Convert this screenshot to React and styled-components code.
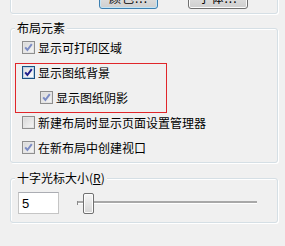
import styled, { createGlobalStyle, css } from "styled-components"

const GlobalStyle = createGlobalStyle`
    body {
        margin: 0;
        background: #f0f0f0;
    }
`

const Page = styled.div`
    width: 285px;
    height: 246px;
    overflow: hidden;
    box-sizing: border-box;
    padding-left: 10px;
    background: #f0f0f0;
    font-family: "Noto Sans CJK SC", "Noto Sans", sans-serif;
    font-size: 12px;
    color: #000;
`

const groupBorder = css`
    box-sizing: border-box;
    width: 268px;
    border: 1px solid #d5dfe5;
    border-radius: 3px;
    box-shadow: inset 1px 1px 0 #fff, 1px 1px 0 #fff;
`

const TopGroup = styled.div`
    ${groupBorder}
    height: 44px;
    margin-top: -30px;
    display: flex;
    align-items: flex-end;
    gap: 30px;
    padding: 0 0 4px 88px;
`

const Button = styled.div`
    box-sizing: border-box;
    width: ${(p) => p.$width}px;
    height: 23px;
    display: flex;
    align-items: center;
    justify-content: center;
    border: 1px solid ${(p) => (p.$focused ? "#3c7fb1" : "#707070")};
    border-radius: 3px;
    background: linear-gradient(#f2f2f2 0%, #ebebeb 50%, #dddddd 51%, #cfcfcf 100%);
    box-shadow: inset 0 0 0 1px ${(p) => (p.$focused ? "#c4e5f6" : "#fbfbfb")};
    letter-spacing: 1px;
`

const Group = styled.fieldset`
    ${groupBorder}
    margin: ${(p) => p.$top}px 0 0 0;
    padding: 0 0 ${(p) => p.$bottom}px 4px;
    min-inline-size: 0;
`

const Legend = styled.legend`
    padding: 0 2px;
    line-height: 14px;
    background: #f0f0f0;
`

const Rows = styled.div`
    display: flex;
    flex-direction: column;
`

const Marked = styled.div`
    position: relative;
    display: flex;
    flex-direction: column;

    &::after {
        content: "";
        position: absolute;
        left: 0;
        top: 3px;
        width: 152px;
        height: 50px;
        box-sizing: border-box;
        border: 1px solid #e0262a;
        pointer-events: none;
    }
`

const Row = styled.div`
    height: 25px;
    display: flex;
    align-items: center;
    gap: 3px;
    padding-left: ${(p) => p.$indent}px;
    white-space: nowrap;
`

const Box = styled.span`
    box-sizing: border-box;
    width: 13px;
    height: 13px;
    flex: none;
    display: flex;
    align-items: center;
    justify-content: center;
    border: 1px solid ${(p) => (p.$active ? "#1c5180" : "#8f8f8f")};
    background: ${(p) =>
        p.$active
            ? "linear-gradient(135deg, #dcdcdc, #ffffff)"
            : "linear-gradient(135deg, #d6d6d6, #f7f7f7)"};
    box-shadow: inset 0 0 0 1px ${(p) => (p.$active ? "#b8d0e8" : "#e4e4e4")};
`

const Check = ({ active, checked }) => (
    <Box $active={active}>
        {checked && (
            <svg width="9" height="9" viewBox="0 0 9 9">
                <path
                    d="M1.2 4.4 L3.4 7 L7.8 1.2"
                    fill="none"
                    stroke={active ? "#21218c" : "#7c8cc4"}
                    strokeWidth="2"
                />
            </svg>
        )}
    </Box>
)

const Option = ({ label, indent = 7, active, checked = true }) => (
    <Row $indent={indent}>
        <Check active={active} checked={checked} />
        <span>{label}</span>
    </Row>
)

const SizeRow = styled.div`
    display: flex;
    align-items: center;
    gap: 18px;
    padding: 7px 0 0 3px;
    height: 22px;
`

const NumberBox = styled.div`
    box-sizing: border-box;
    width: 41px;
    height: 22px;
    display: flex;
    align-items: center;
    padding-left: 3px;
    border: 1px solid #c5c5c5;
    border-top-color: #abadb3;
    background: #fff;
    font-family: "Liberation Sans", Arial, sans-serif;
    font-size: 13px;
`

const Slider = styled.div`
    position: relative;
    width: 180px;
    height: 22px;
    display: flex;
    align-items: center;
`

const Track = styled.div`
    width: 100%;
    height: 2px;
    margin-top: -1px;
    background: #a8a8a8;
    border-bottom: 1px solid #fff;
`

const Tick = styled.div`
    position: absolute;
    left: 0;
    top: 9px;
    width: 1px;
    height: 4px;
    background: #8a8a8a;
`

const Thumb = styled.div`
    position: absolute;
    left: 6px;
    top: 1px;
    box-sizing: border-box;
    width: 11px;
    height: 21px;
    border: 1px solid #707070;
    border-radius: 2px;
    background: linear-gradient(#f6f6f6 0%, #e6e6e6 50%, #d6d6d6 100%);
    box-shadow: inset 0 0 0 1px #fcfcfc;
`

export default function App() {
    return (
        <>
            <GlobalStyle />
            <Page>
                <TopGroup>
                    <Button $width={59} $focused>颜色...</Button>
                    <Button $width={60}>字体...</Button>
                </TopGroup>

                <Group $top={7} $bottom={2}>
                    <Legend>布局元素</Legend>
                    <Rows>
                        <Option label="显示可打印区域" />
                        <Marked>
                            <Option label="显示图纸背景" active />
                            <Option label="显示图纸阴影" indent={25} />
                        </Marked>
                        <Option label="新建布局时显示页面设置管理器" checked={false} />
                        <Option label="在新布局中创建视口" />
                    </Rows>
                </Group>

                <Group $top={8} $bottom={8}>
                    <Legend>
                        十字光标大小(<u>R</u>)
                    </Legend>
                    <SizeRow>
                        <NumberBox>5</NumberBox>
                        <Slider>
                            <Track />
                            <Tick />
                            <Thumb />
                        </Slider>
                    </SizeRow>
                </Group>
            </Page>
        </>
    )
}
